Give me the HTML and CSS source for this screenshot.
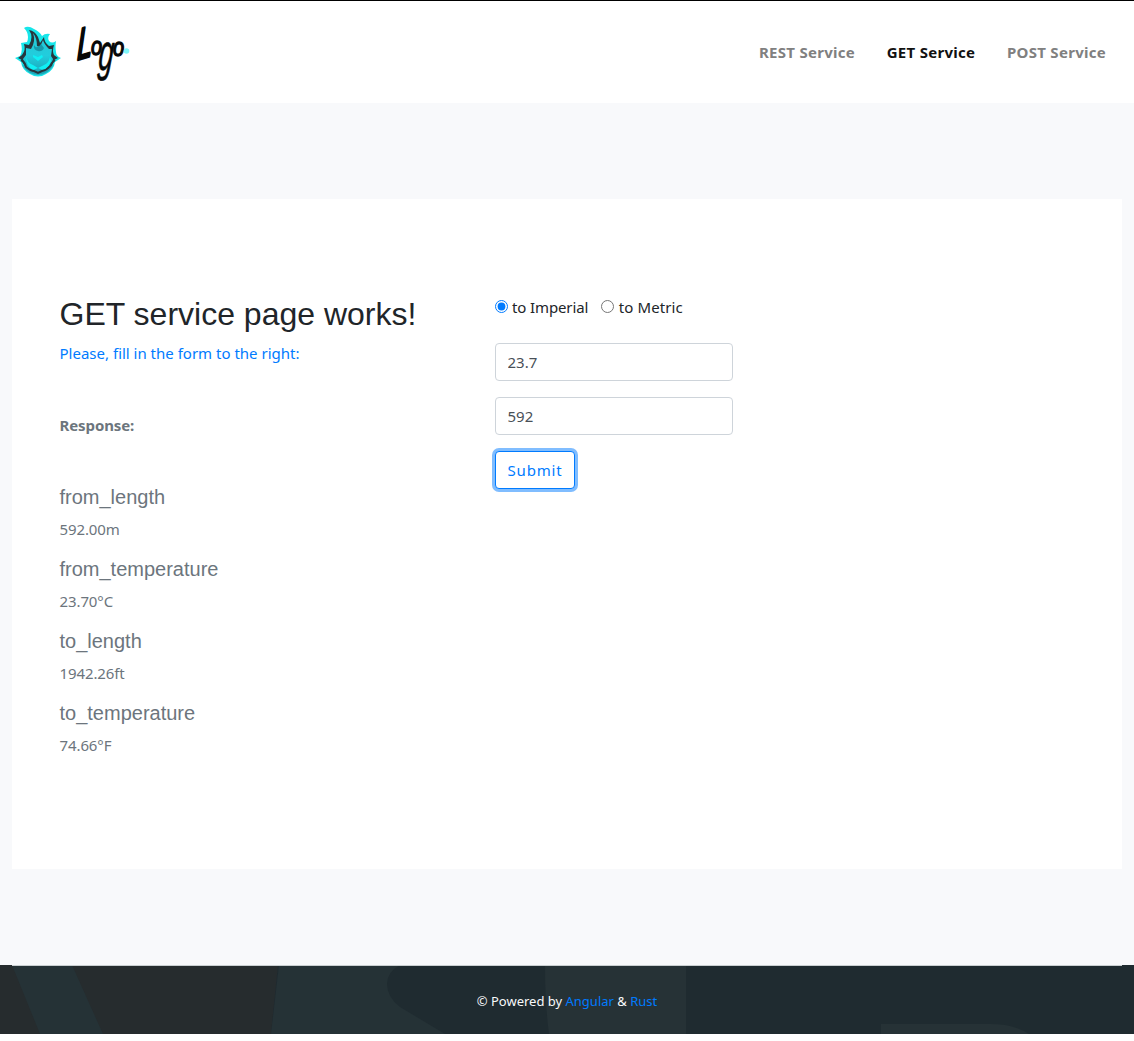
FILE: index.html
```html
<!DOCTYPE html>
<html lang="en">
<head>
<meta charset="utf-8">
<title>GET Service</title>
<link rel="stylesheet" href="styles.css">
</head>
<body>
<header class="navbar">
  <a class="brand" href="#" aria-label="Home">
    <svg class="flame" width="46" height="52" viewBox="0 0 46 52">
      <defs><linearGradient id="fire" x2="0" y2="1"><stop stop-color="#24c6d4"/><stop offset=".55" stop-color="#22cddd"/><stop offset="1" stop-color="#18a3b6"/></linearGradient></defs>
      <path fill="#16e6ea" d="M9 2Q13-1 19 3q6 3 8 7 3-3 8-2-3 3-1 7 3 3 7 0-1 6 0 11 0 4 5 6l-6 4q-1 8-9 12-8 5-16 0Q7 44 6 36L0 32l5-2q3-5 1-13l6-1q3-8-3-14z"/>
      <path fill="#24a9ba" d="M7 38q2 5 8 9 8 4 16 0 6-4 8-9l-8 7-8 3-8-3z"/>
      <path fill="#27363d" d="M14 4q6 1 9 7l2 6 4-6q0 5 5 9l5-1q-2 6 0 10l4 3-4 2q-1 7-7 10-9 5-17 0-7-4-8-10l-4-2 4-3q4-5 2-11l5 1q5-8 0-15z"/>
      <path fill="url(#fire)" d="M18 7q4 5 4 13l3 1 3-7q1 4 6 9h3l-1 7 2 3-3 9q-4 6-12 6T11 42L8 33l3-4V22l5 1q5-8 2-16z"/>
      <path fill="#1798aa" d="M19 19q3 5 7-1l3 4q-2 4-6 3-5-1-4-6z"/>
      <path fill="#10eff4" d="M18 29l5 2 4-2 1 2-5 4-5-4zM11 30q1 7 7 9l5 3 6-3q5-2 6-8l1 4q-2 8-8 9l-5-2-5 2q-7-3-7-14z"/>
      <path fill="none" stroke="#27363d" stroke-width="2" d="M6 34q4 2 5 7 5 4 8 4l4 2 4-2q5-1 8-5 2-4 5-6"/>
    </svg>
    <svg class="wordmark" width="60" height="64" viewBox="0 0 60 64">
      <g fill="#050707" stroke="#050707" font-family="Liberation Sans" font-style="italic" stroke-linejoin="round">
        <text transform="translate(3 40) rotate(-16) skewX(-18) scale(.65 1)" font-size="42" stroke-width="2.6">L</text>
        <text transform="translate(17 35) scale(.8 1)" font-size="25" stroke-width="1.4">o</text>
        <text transform="translate(23.5 49.5) skewX(-5) scale(.53 1)" font-size="51" stroke-width=".6">g</text>
        <text transform="translate(39 36) scale(.8 1)" font-size="25" stroke-width="1.4">o</text>
      </g>
      <circle cx="52.5" cy="31" r="2.8" fill="#80f7f9"/>
    </svg>
  </a>
  <nav class="menu">
    <a href="#">REST Service</a>
    <a class="active" href="#">GET Service</a>
    <a href="#">POST Service</a>
  </nav>
</header>
<main class="page">
  <section class="panel">
    <div class="info">
      <h2>GET service page works!</h2>
      <p class="hint">Please, fill in the form to the right:</p>
      <p class="label">Response:</p>
      <h5>from_length</h5><p>592.00m</p>
      <h5>from_temperature</h5><p>23.70°C</p>
      <h5>to_length</h5><p>1942.26ft</p>
      <h5>to_temperature</h5><p>74.66°F</p>
    </div>
    <form class="form">
      <div class="radios">
        <label><input type="radio" name="unit" checked>to Imperial</label>
        <label><input type="radio" name="unit">to Metric</label>
      </div>
      <input class="control" value="23.7">
      <input class="control" value="592">
      <button class="submit" type="button">Submit</button>
    </form>
  </section>
</main>
<footer class="footer">
  <svg class="backdrop" width="1134" height="69" viewBox="0 0 1134 69">
    <path fill="#1f2b30" d="M0 0h1134v69H0z"/>
    <path fill="#262c2e" d="M0 0h278l-7 69H0z"/>
    <path fill="#253236" d="M12 0h60l31 69H40zM279 0h121q-13 7-13 19 0 13 13 23l45 27H271z"/>
    <path fill="#263236" d="M545 0h141v69H549q-4-30-4-69zM881 59h109q24 0 39 10H881z"/>
  </svg>
  <div class="credit">© Powered by <a href="#">Angular</a> &amp; <a href="#">Rust</a></div>
</footer>
</body>
</html>
```
FILE: styles.css
```css
* { box-sizing: border-box; }
body {
  margin: 0;
  background: #fff;
  color: #212529;
  font: 15px/24px "Noto Sans", sans-serif;
}
a { color: #007bff; text-decoration: none; }
h2, h5, p { margin: 0; font-weight: 400; }
.navbar {
  height: 103px;
  border-top: 1px solid #000;
  display: flex;
  justify-content: space-between;
  align-items: center;
  padding: 0 28px 0 15px;
}
.brand { display: flex; align-items: center; gap: 13px; }
.wordmark { overflow: visible; }
.menu { display: flex; gap: 31.7px; font-weight: 700; letter-spacing: 0.28px; }
.menu a { color: #808080; white-space: nowrap; }
.menu .active { color: #111; }
.page { background: #f8f9fb; padding: 96px 12px; }
.panel {
  height: 670px;
  background: #fff;
  padding: 96px 47.5px;
  display: grid;
  grid-template-columns: 435.5px 238px;
}
.info { color: #6c757d; }
.info h2, .info h5 { font-family: "Liberation Sans", sans-serif; }
.info h2 { color: #212529; font-size: 32px; line-height: 38.4px; margin-bottom: 8px; }
.info h5 { font-size: 20px; line-height: 24px; margin-bottom: 8px; }
.info p { margin-bottom: 16px; letter-spacing: -0.1px; }
.info .hint { color: #007bff; margin-bottom: 48px; letter-spacing: 0; }
.info .label { font-weight: 700; margin-bottom: 48px; }
.form { display: flex; flex-direction: column; align-items: flex-start; }
.radios { display: flex; gap: 12.5px; margin-bottom: 24px; }
.radios label { display: flex; align-items: flex-start; gap: 4px; white-space: nowrap; letter-spacing: -0.12px; }
.radios label + label { gap: 5px; letter-spacing: 0.12px; }
.radios input { margin: 5px 0 0; width: 13px; height: 13px; accent-color: #007bff; }
.control {
  width: 238px;
  height: 38px;
  margin: 0 0 16px;
  padding: 6px 11.5px;
  border: 1px solid #ced4da;
  border-radius: 4px;
  color: #495057;
  font: inherit;
}
.submit {
  width: 80px;
  height: 38px;
  padding: 0;
  border: 1px solid #007bff;
  border-radius: 4px;
  background: #fff;
  color: #007bff;
  font: inherit;
  letter-spacing: 0.8px;
  box-shadow: 0 0 0 3px #80bdff;
}
.footer { display: grid; height: 69px; }
.backdrop, .credit { grid-area: 1 / 1; }
.credit {
  z-index: 1;
  margin: 0 12px;
  border-top: 1px solid #c9cfd1;
  padding-top: 23px;
  text-align: center;
  color: #f8f9fa;
  font-size: 13px;
}
```
